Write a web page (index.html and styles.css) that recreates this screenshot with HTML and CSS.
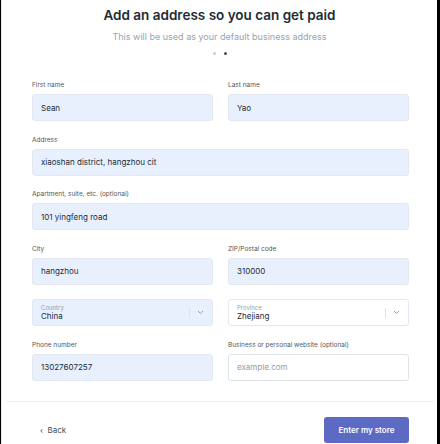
FILE: index.html
```html
<!DOCTYPE html>
<html lang="en">
<head>
  <meta charset="UTF-8">
  <title>Add an address</title>
  <link rel="stylesheet" href="styles.css">
</head>
<body>
  <div class="page">
    <div class="header">
      <h1>Add an address so you can get paid</h1>
      <p class="subtitle">This will be used as your default business address</p>
      <div class="dots">
        <span class="dot"></span>
        <span class="dot active"></span>
      </div>
    </div>

    <form class="form">
      <div class="row two">
        <div class="field">
          <label>First name</label>
          <div class="input filled">Sean</div>
        </div>
        <div class="field">
          <label>Last name</label>
          <div class="input filled">Yao</div>
        </div>
      </div>

      <div class="field">
        <label>Address</label>
        <div class="input filled">xiaoshan district, hangzhou cit</div>
      </div>

      <div class="field">
        <label>Apartment, suite, etc. (optional)</label>
        <div class="input filled">101 yingfeng road</div>
      </div>

      <div class="row two">
        <div class="field">
          <label>City</label>
          <div class="input filled">hangzhou</div>
        </div>
        <div class="field">
          <label>ZIP/Postal code</label>
          <div class="input filled">310000</div>
        </div>
      </div>

      <div class="row two">
        <div class="select filled">
          <div class="select-text">
            <span class="select-label">Country</span>
            <span class="select-value">China</span>
          </div>
          <span class="select-sep"></span>
          <svg class="chevron" width="7" height="5" viewBox="0 0 7 5"><path d="M1 1l2.5 2.5L6 1" fill="none" stroke="#919eab" stroke-width="1"/></svg>
        </div>
        <div class="select">
          <div class="select-text">
            <span class="select-label">Province</span>
            <span class="select-value">Zhejiang</span>
          </div>
          <span class="select-sep"></span>
          <svg class="chevron" width="7" height="5" viewBox="0 0 7 5"><path d="M1 1l2.5 2.5L6 1" fill="none" stroke="#919eab" stroke-width="1"/></svg>
        </div>
      </div>

      <div class="row two">
        <div class="field">
          <label>Phone number</label>
          <div class="input filled">13027607257</div>
        </div>
        <div class="field">
          <label>Business or personal website (optional)</label>
          <div class="input placeholder">example.com</div>
        </div>
      </div>
    </form>

    <div class="footer">
      <a class="back" href="#">&lsaquo;&nbsp; Back</a>
      <button class="primary" type="button">Enter my store</button>
    </div>
  </div>
</body>
</html>
```

FILE: styles.css
```css
body {
  margin: 0;
  background: #000;
  font-family: Inter, "Noto Sans", sans-serif;
  color: #212b36;
}

.page {
  width: 435px;
  height: 444px;
  background: #fff;
  border-left: 1px solid #ececec;
  margin-left: 1px;
  overflow: hidden;
}

.header {
  text-align: center;
  padding-top: 5px;
}

.header h1 {
  margin: 0;
  font-size: 13.5px;
  font-weight: 600;
  line-height: 20px;
  color: #212b36;
}

.subtitle {
  margin: 6px 0 0;
  font-size: 9px;
  line-height: 12px;
  color: #9aa4ae;
}

.dots {
  display: flex;
  justify-content: center;
  gap: 8px;
  margin-top: 9px;
}

.dot {
  width: 3px;
  height: 3px;
  border-radius: 50%;
  background: #c4cdd5;
}

.dot.active {
  background: #454f5b;
}

.form {
  display: flex;
  flex-direction: column;
  gap: 14.5px;
  padding: 26px 28px 0 30px;
}

.row.two {
  display: grid;
  grid-template-columns: 1fr 1fr;
  gap: 15px;
}

.field {
  display: flex;
  flex-direction: column;
}

.field label {
  font-size: 6.5px;
  line-height: 9px;
  color: #50575e;
  margin-bottom: 4px;
}

.input {
  height: 27px;
  box-sizing: border-box;
  border: 1px solid #e3e8f0;
  border-radius: 3px;
  padding: 0 8px;
  display: flex;
  align-items: center;
  font-size: 8px;
  color: #212b36;
}

.input.filled,
.select.filled {
  background: #e9f0fd;
}

.input.placeholder {
  background: #fff;
  border-color: #dfe3e8;
  color: #919eab;
}

.select {
  height: 27px;
  box-sizing: border-box;
  border: 1px solid #e3e8f0;
  border-radius: 3px;
  padding: 0 8px;
  display: flex;
  align-items: center;
  background: #fff;
}

.select-text {
  flex: 1;
  display: flex;
  flex-direction: column;
}

.select-label {
  font-size: 6px;
  line-height: 7px;
  color: #919eab;
}

.select-value {
  font-size: 8px;
  line-height: 10px;
  color: #212b36;
}

.select-sep {
  width: 1px;
  height: 10px;
  background: #dfe3e8;
  margin-right: 7px;
}

.footer {
  display: flex;
  justify-content: space-between;
  align-items: center;
  margin: 20px 3px 0 4px;
  border-top: 1px solid #eef0f2;
  padding: 15px 25px 0 34px;
}

.back {
  font-size: 8px;
  color: #454f5b;
  text-decoration: none;
}

.primary {
  width: 85px;
  height: 26px;
  border: none;
  border-radius: 3px;
  background: #5c6ac4;
  color: #fff;
  font-family: inherit;
  font-size: 8px;
  font-weight: 600;
}
```
